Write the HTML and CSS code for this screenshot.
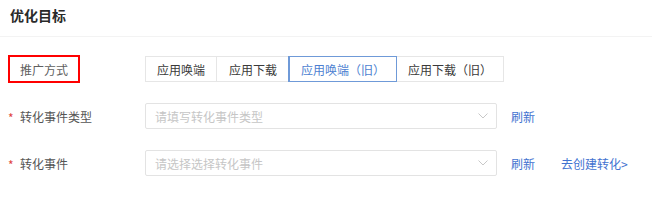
FILE: index.html
```html
<!DOCTYPE html>
<html lang="zh-CN">
<head>
    <meta charset="UTF-8">
    <title>优化目标</title>
    <link rel="stylesheet" href="styles.css">
</head>
<body>

    <!-- Section title -->
    <div class="section-head">
        <h3>优化目标</h3>
    </div>

    <div class="form">
        <!-- 推广方式 -->
        <div class="form-row">
            <div class="form-label">
                <span class="label-box">推广方式</span>
            </div>
            <div class="btn-group">
                <span class="btn">应用唤端</span>
                <span class="btn">应用下载</span>
                <span class="btn active">应用唤端（旧）</span>
                <span class="btn">应用下载（旧）</span>
            </div>
        </div>

        <!-- 转化事件类型 -->
        <div class="form-row">
            <div class="form-label">
                <span class="required">*</span>转化事件类型
            </div>
            <div class="select">
                <span class="placeholder">请填写转化事件类型</span>
                <svg class="arrow" width="10" height="6" viewBox="0 0 10 6"><path d="M0.5 0.5 L5 5 L9.5 0.5" fill="none" stroke="#c8c8c8" stroke-width="1"/></svg>
            </div>
            <a href="#" class="link">刷新</a>
        </div>

        <!-- 转化事件 -->
        <div class="form-row">
            <div class="form-label">
                <span class="required">*</span>转化事件
            </div>
            <div class="select">
                <span class="placeholder">请选择选择转化事件</span>
                <svg class="arrow" width="10" height="6" viewBox="0 0 10 6"><path d="M0.5 0.5 L5 5 L9.5 0.5" fill="none" stroke="#c8c8c8" stroke-width="1"/></svg>
            </div>
            <a href="#" class="link">刷新</a>
            <a href="#" class="link link-create">去创建转化&gt;</a>
        </div>
    </div>

</body>
</html>
```

FILE: styles.css
```css
* {
    margin: 0;
    padding: 0;
    box-sizing: border-box;
}

body {
    font-family: "Noto Sans CJK SC", "Noto Sans", sans-serif;
    background-color: #fff;
    color: #333;
    font-size: 12px;
}

/* Section title */
.section-head {
    height: 37px;
    padding: 5px 10px 0;
    border-bottom: 1px solid #f3f3f3;
}

.section-head h3 {
    font-size: 14px;
    font-weight: bold;
    color: #2a2a2a;
    line-height: 20px;
}

/* Form rows */
.form {
    padding: 19px 0 0 8px;
}

.form-row {
    display: flex;
    align-items: center;
    height: 26px;
    margin-bottom: 21px;
}

.form-label {
    width: 137px;
    display: flex;
    align-items: center;
    color: #555;
}

.label-box {
    display: inline-flex;
    align-items: center;
    width: 72px;
    height: 28px;
    padding-left: 10px;
    border: 2px solid #f00;
    color: #606060;
}

.required {
    color: #e0443e;
    width: 12px;
    padding-top: 3px;
}

/* Button group */
.btn-group {
    display: flex;
    height: 26px;
    border: 1px solid #e6e6e6;
}

.btn {
    display: flex;
    align-items: center;
    justify-content: center;
    height: 100%;
    color: #3a3a3a;
    border-left: 1px solid #e6e6e6;
}

.btn:nth-child(1) { width: 70px; border-left: none; }
.btn:nth-child(2) { width: 73px; }
.btn:nth-child(3) { width: 107px; }
.btn:nth-child(4) { width: 107px; }

.btn.active {
    color: #4d7fd1;
    outline: 1px solid #6f9ad8;
    border-left-color: #6f9ad8;
    position: relative;
}

/* Select */
.select {
    width: 352px;
    height: 26px;
    border: 1px solid #e3e3e3;
    border-radius: 2px;
    display: flex;
    align-items: center;
    justify-content: space-between;
    padding: 0 8px 0 9px;
}

.placeholder {
    color: #c6c6c6;
}

.link {
    color: #4272d0;
    text-decoration: none;
    margin-left: 14px;
}

.link-create {
    margin-left: 26px;
}
```
